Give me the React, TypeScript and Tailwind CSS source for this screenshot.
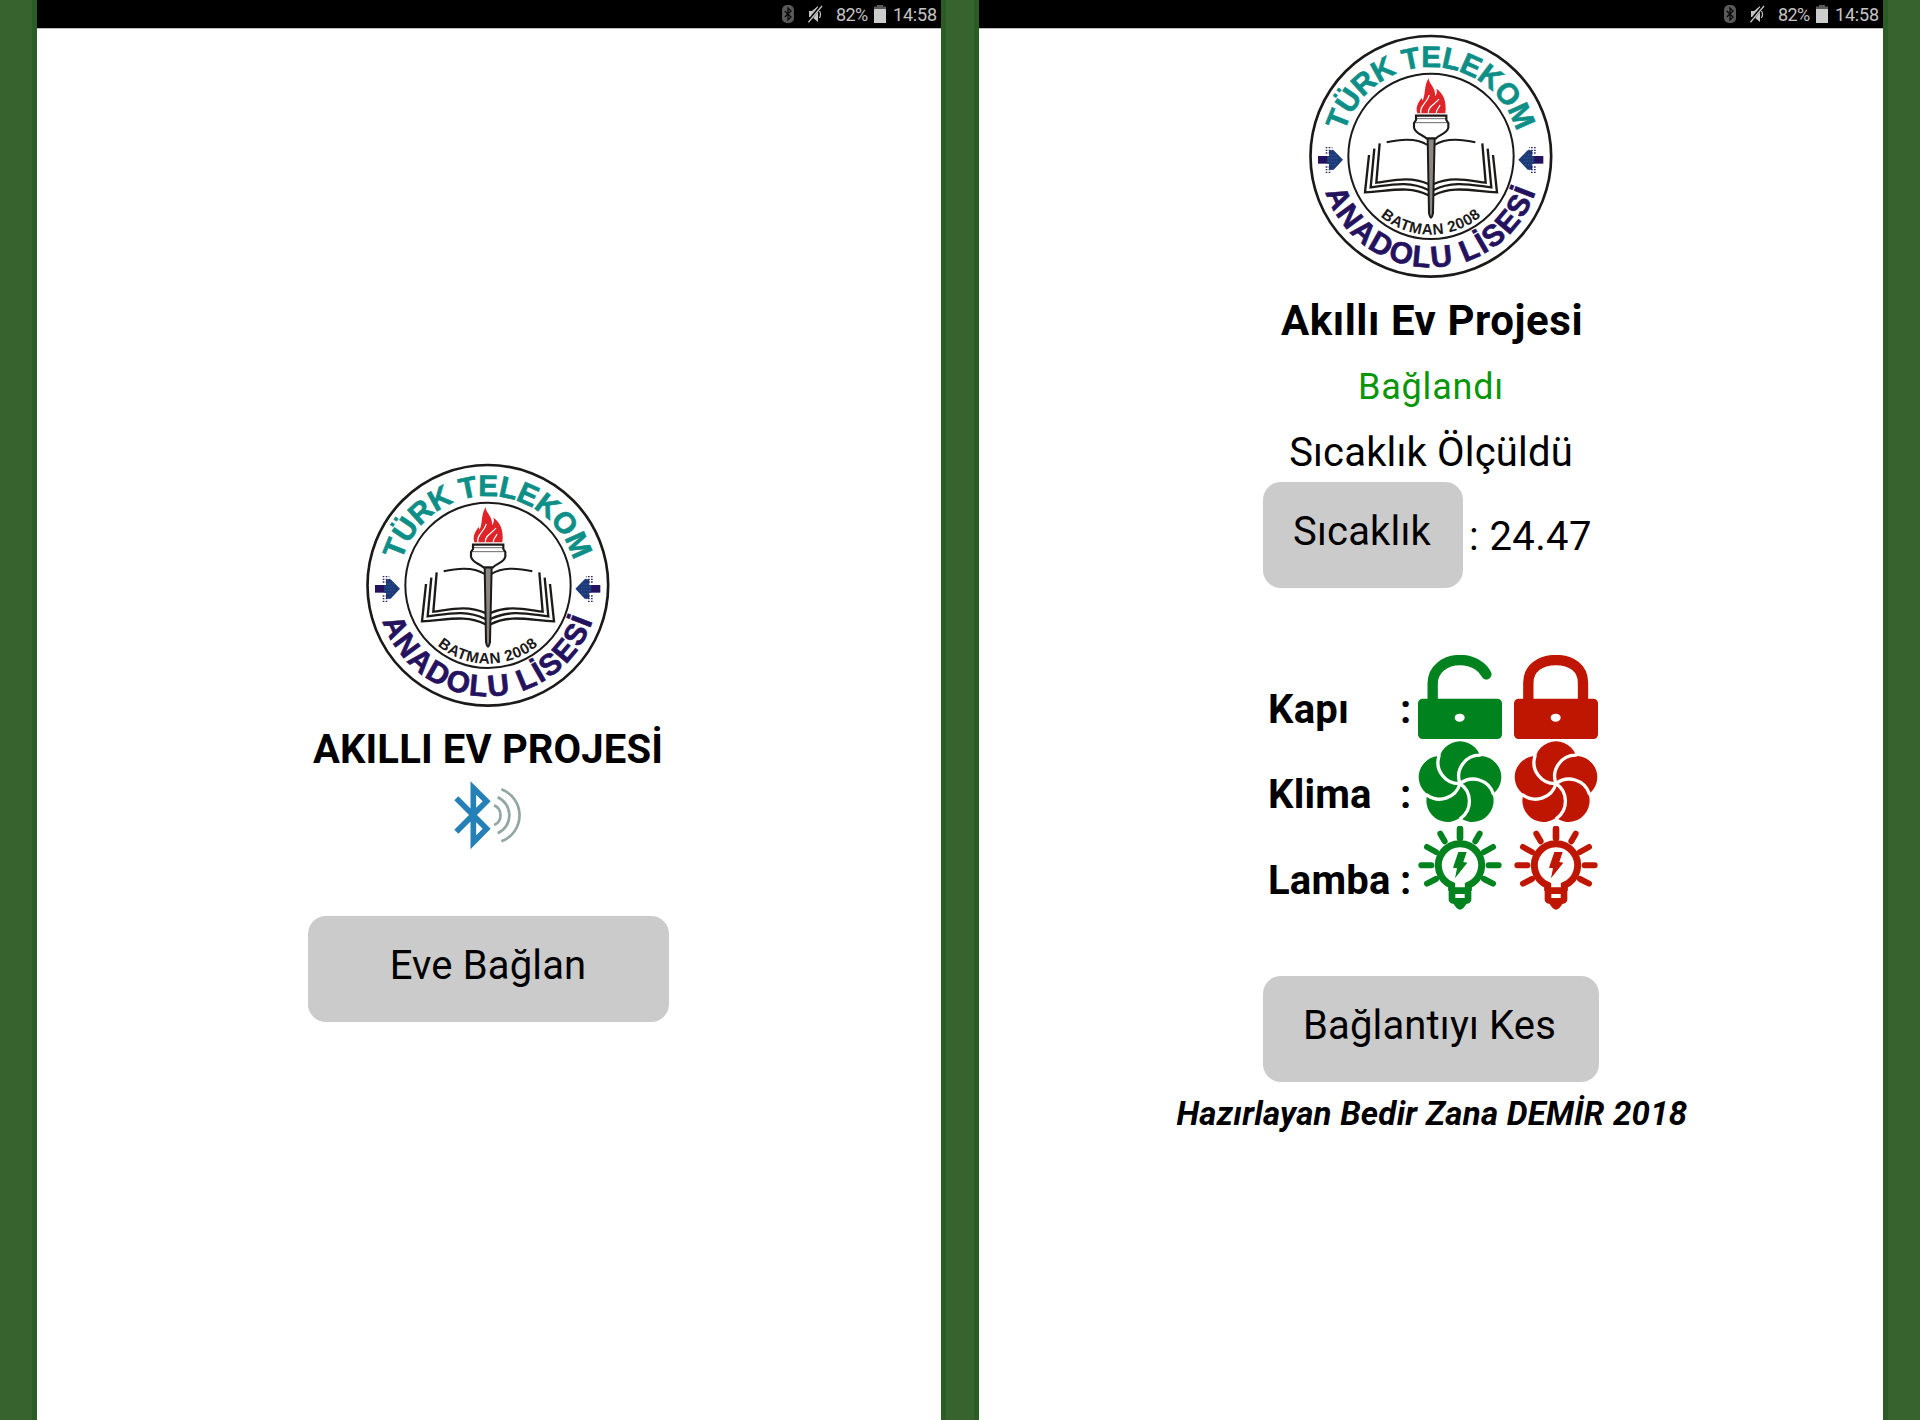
import React from "react";

const GREEN = "#00821f";
const RED = "#be1600";

function BookHalf() {
  return (
    <g fill="none" stroke="#1c1a19" strokeWidth="7">
      <path d="M283 364 C325 354 375 352 406 372" strokeWidth="6" />
      <path d="M262 367 L252 485 C305 478 355 465 408 489" />
      <path d="M246 383 L235 499 C295 492 350 478 408 507" />
      <path d="M230 402 L218 514 C290 511 350 492 408 523" />
    </g>
  );
}

function RingArrow() {
  return (
    <g>
      <rect x="77" y="405" width="36" height="23" fill="#25125f" />
      <path d="M104 405 H110 V388 H124 L152 416 L124 446 H110 V428 H104 Z" fill="#1d3a78" />
      <path
        d="M100 380 H120 M100 388 H122 M100 396 H118 M100 438 H118 M100 446 H120 M100 454 H116"
        stroke="#2c2a6b"
        strokeWidth="4"
        strokeDasharray="5 4"
      />
      <path
        d="M112 402 H132 M108 411 H140 M108 421 H140 M112 431 H132"
        stroke="#4f7fb5"
        strokeWidth="2"
        strokeDasharray="3 5"
      />
    </g>
  );
}

function SchoolLogo({ id }: { id: string }) {
  const top = `${id}-top`;
  const bottom = `${id}-bottom`;
  const inner = `${id}-inner`;
  return (
    <svg viewBox="50 39 732 732" className="mb-px block size-[244px] shrink-0">
      <defs>
        <path id={top} d="M147 406 A268 268 0 0 1 683 406" />
        <path id={bottom} d="M82 406 A333 333 0 0 0 748 406" />
        <path id={inner} d="M180 406 A235 235 0 0 0 650 406" />
      </defs>
      <circle cx="415.5" cy="406" r="361" fill="#fff" stroke="#1c1a19" strokeWidth="8" />
      <circle cx="416" cy="406" r="248" fill="#fff" stroke="#1c1a19" strokeWidth="6" />
      <g fontFamily="'Liberation Sans', sans-serif" fontWeight="700" textAnchor="middle">
        <text fontSize="89" fill="#0d8f88" stroke="#0d8f88" strokeWidth="2">
          <textPath href={`#${top}`} startOffset="50%" textLength="692">
            TÜRK TELEKOM
          </textPath>
        </text>
        <text fontSize="90" fill="#25125f" stroke="#25125f" strokeWidth="2">
          <textPath href={`#${bottom}`} startOffset="50%" textLength="828">
            ANADOLU LİSESİ
          </textPath>
        </text>
        <text fontSize="46" fill="#1c1a19">
          <textPath href={`#${inner}`} startOffset="50%" textLength="328">
            BATMAN 2008
          </textPath>
        </text>
      </g>
      <RingArrow />
      <g transform="translate(830 0) scale(-1 1)">
        <RingArrow />
      </g>
      <BookHalf />
      <g transform="translate(832 0) scale(-1 1)">
        <BookHalf />
      </g>
      <path
        d="M406 350 L410 576 Q416 604 422 576 L427 350 Z"
        fill="#8a8886"
        stroke="#1c1a19"
        strokeWidth="6"
      />
      <path
        d="M371 284 H462 V297 L468 306 V320 C465 338 440 341 431 352 H402 C392 341 368 338 365 320 V306 L371 297 Z"
        fill="#fff"
        stroke="#1c1a19"
        strokeWidth="6.5"
      />
      <path d="M371 293 H462 M367 305 H466" stroke="#1c1a19" strokeWidth="2" />
      <path
        d="M409 171 C408 188 431 198 428 226 C434 219 435 210 432 203 C452 216 464 240 459 277 H375 C369 259 377 245 388 231 L391 239 C401 216 394 196 409 171 Z"
        fill="#df2429"
      />
      <path
        d="M386 277 C380 255 404 247 411 222 M408 277 C404 258 430 248 440 234 M432 277 C430 266 440 262 443 252"
        fill="none"
        stroke="#fff"
        strokeWidth="3.5"
      />
    </svg>
  );
}

function StatusBar() {
  return (
    <div className="flex h-7 shrink-0 items-center justify-end bg-black pr-[6px] text-[18px] leading-7 text-[#c4c4c4]">
      <svg viewBox="0 0 12 18" className="mr-[14px] h-[18px] w-3">
        <rect width="12" height="18" rx="5" fill="#5a5a5a" />
        <path d="M2.8 6 L9 12 L6 15 V3 L9 6 L2.8 12" fill="none" stroke="#0a0a0a" strokeWidth="1.3" />
      </svg>
      <svg viewBox="0 0 15 18" className="mr-[13px] h-[18px] w-[15px]">
        <path d="M1 6 H4 L10 1 V17 L4 12 H1 Z" fill="#c4c4c4" />
        <path d="M0 16.8 L13.2 .8" stroke="#000" strokeWidth="3" />
        <path d="M.4 17.4 L14 1" stroke="#c4c4c4" strokeWidth="1.3" />
        <path d="M11.5 6 Q13.5 9 11.5 13" fill="none" stroke="#c4c4c4" strokeWidth="1.2" />
      </svg>
      <span className="mt-px w-[38px] whitespace-nowrap tracking-[-0.6px]">82%</span>
      <svg viewBox="0 0 12 18" className="mr-[7px] h-[18px] w-3">
        <path d="M3 0 H9 V1.5 H12 V4 H0 V1.5 H3 Z" fill="#5a5a5a" />
        <rect y="4" width="12" height="14" fill="#cdcdcd" />
      </svg>
      <span className="mt-px w-[42px] whitespace-nowrap tracking-[-0.2px]">14:58</span>
    </div>
  );
}

function BluetoothIcon() {
  return (
    <svg viewBox="494 207 204 210" className="block h-[70px] w-[68px]">
      <path
        d="M501 262 L592 353 L552 394 V231 L592 271 L501 362"
        fill="none"
        stroke="#2480b6"
        strokeWidth="17"
      />
      <g fill="none" stroke="#92a6a2" strokeWidth="8">
        <path d="M614 283 A32 32 0 0 1 614 342" />
        <path d="M625 259 A59 59 0 0 1 625 367" />
        <path d="M636 235 A83 83 0 0 1 636 391" />
      </g>
    </svg>
  );
}

function LockIcon({ color, open }: { color: string; open?: boolean }) {
  return (
    <svg viewBox="504 45 252 252" className="block size-[84px]">
      <path
        d={
          open
            ? "M548 185 V130 C548 88 585 60 630 60 C672 60 699 82 709 103"
            : "M547 185 V128 C547 86 582 60 630 60 C678 60 711 86 711 128 V185"
        }
        fill="none"
        stroke={color}
        strokeWidth="31"
        strokeLinecap="round"
      />
      <rect x="504" y="176" width="252" height="121" rx="14" fill={color} />
      <ellipse cx="629" cy="233" rx="15" ry="12" fill="#fff" />
    </svg>
  );
}

const PETALS = [0, 72, 144, 216, 288];

function FanIcon({ color }: { color: string }) {
  return (
    <svg viewBox="505 298 252 252" className="block size-[84px]">
      {PETALS.map((angle) => (
        <circle key={angle} cx="631" cy="365.5" r="63.5" fill={color} transform={`rotate(${angle} 631 429)`} />
      ))}
      {PETALS.map((angle) => (
        <path
          key={angle}
          d="M631 429 A63.5 63.5 0 0 1 568 346 L567 340"
          fill="none"
          stroke="#fff"
          strokeWidth="10"
          transform={`rotate(${angle} 631 429)`}
        />
      ))}
    </svg>
  );
}

function BulbHalf({ color }: { color: string }) {
  return (
    <path
      d="M572 577 L585 600 M532 617 L559 632 M515 672 L545 672 M532 727 L559 713"
      stroke={color}
      strokeWidth="18"
      strokeLinecap="round"
    />
  );
}

function BulbIcon({ color }: { color: string }) {
  return (
    <svg viewBox="505 554 252 252" className="block size-[84px]">
      <BulbHalf color={color} />
      <g transform="translate(1262 0) scale(-1 1)">
        <BulbHalf color={color} />
      </g>
      <path d="M631 563 V590" stroke={color} strokeWidth="20" strokeLinecap="round" />
      <path d="M606 748 V732 A65 65 0 1 1 656 732 V748" fill="none" stroke={color} strokeWidth="21" />
      <path
        d="M597 738 H665 V776 Q663 786 650 788 Q640 805 631 805 Q622 805 612 788 Q599 786 597 776 Z"
        fill={color}
      />
      <rect x="617" y="758" width="28" height="12" fill="#fff" />
      <path d="M626 632 H651 L641 662 L653 664 L616 711 L622 681 L610 679 Z" fill={color} />
    </svg>
  );
}

function GrayButton({ className, children }: { className: string; children: React.ReactNode }) {
  return (
    <button
      className={`flex h-[106px] shrink-0 justify-center whitespace-nowrap rounded-[18px] bg-[#cbcbcb] pt-[26px] text-[40px] leading-[48px] ${className}`}
    >
      {children}
    </button>
  );
}

const DEVICES = [
  { name: "Kapı", on: <LockIcon color={GREEN} open />, off: <LockIcon color={RED} /> },
  { name: "Klima", on: <FanIcon color={GREEN} />, off: <FanIcon color={RED} /> },
  { name: "Lamba", on: <BulbIcon color={GREEN} />, off: <BulbIcon color={RED} /> },
];

export default function App() {
  return (
    <div className="flex h-[1420px] w-[1920px] justify-center gap-[38px] overflow-hidden bg-[#37632f] font-['Roboto',sans-serif] text-black">
      <section className="flex w-[904px] flex-col bg-white shadow-[0_0_0_5px_#2c5c25]">
        <StatusBar />
        <div className="h-px bg-[#bdbdbd]" />
        <main className="flex flex-col items-center pr-[2px] pt-[434px]">
          <SchoolLogo id="start" />
          <h1 className="mt-[18px] h-12 whitespace-nowrap text-[40px] font-bold leading-[48px] tracking-[0.15px]">
            AKILLI EV PROJESİ
          </h1>
          <div className="mt-[6px]">
            <BluetoothIcon />
          </div>
          <GrayButton className="mt-[66px] w-[361px] tracking-[0.15px]">Eve Bağlan</GrayButton>
        </main>
      </section>

      <section className="flex w-[904px] flex-col bg-white shadow-[0_0_0_5px_#2c5c25]">
        <StatusBar />
        <div className="h-px bg-[#bdbdbd]" />
        <main className="flex flex-col items-center pt-[5px]">
          <SchoolLogo id="control" />
          <h1 className="mt-[17px] h-[50px] whitespace-nowrap pl-[2px] text-[42px] font-bold leading-[50px] tracking-[0.55px]">
            Akıllı Ev Projesi
          </h1>
          <p className="mt-[19px] h-[44px] whitespace-nowrap text-[36px] leading-[44px] tracking-[0.8px] text-[#0a960a]">
            Bağlandı
          </p>
          <p className="mt-[20px] h-12 whitespace-nowrap text-[40px] leading-[48px] tracking-[0.17px]">
            Sıcaklık Ölçüldü
          </p>
          <div className="mt-[5px] flex w-[336px] items-center">
            <GrayButton className="w-[200px] pr-[2px] tracking-[0.2px]">Sıcaklık</GrayButton>
            <span className="ml-[6px] mt-[4px] whitespace-nowrap text-[40px] leading-[48px] tracking-[0.4px]">
              : 24.47
            </span>
          </div>
          <div className="mt-[67px] flex w-[336px] flex-col gap-[1.4px]">
            {DEVICES.map((device) => (
              <div key={device.name} className="flex h-[84px] items-center text-[40px] font-bold leading-[48px]">
                <span className="ml-[5px] mt-[26px] w-[132px] tracking-[0.2px]">{device.name}</span>
                <span className="mt-[26px] w-[18px]">:</span>
                <div className="flex gap-3">
                  {device.on}
                  {device.off}
                </div>
              </div>
            ))}
          </div>
          <GrayButton className="mt-[66px] w-[336px] pr-[3px] tracking-[0.15px]">Bağlantıyı Kes</GrayButton>
          <p className="mt-[12px] h-10 whitespace-nowrap pl-[2px] text-[33px] font-bold italic leading-10 tracking-[0.25px]">
            Hazırlayan Bedir Zana DEMİR 2018
          </p>
        </main>
      </section>
    </div>
  );
}
